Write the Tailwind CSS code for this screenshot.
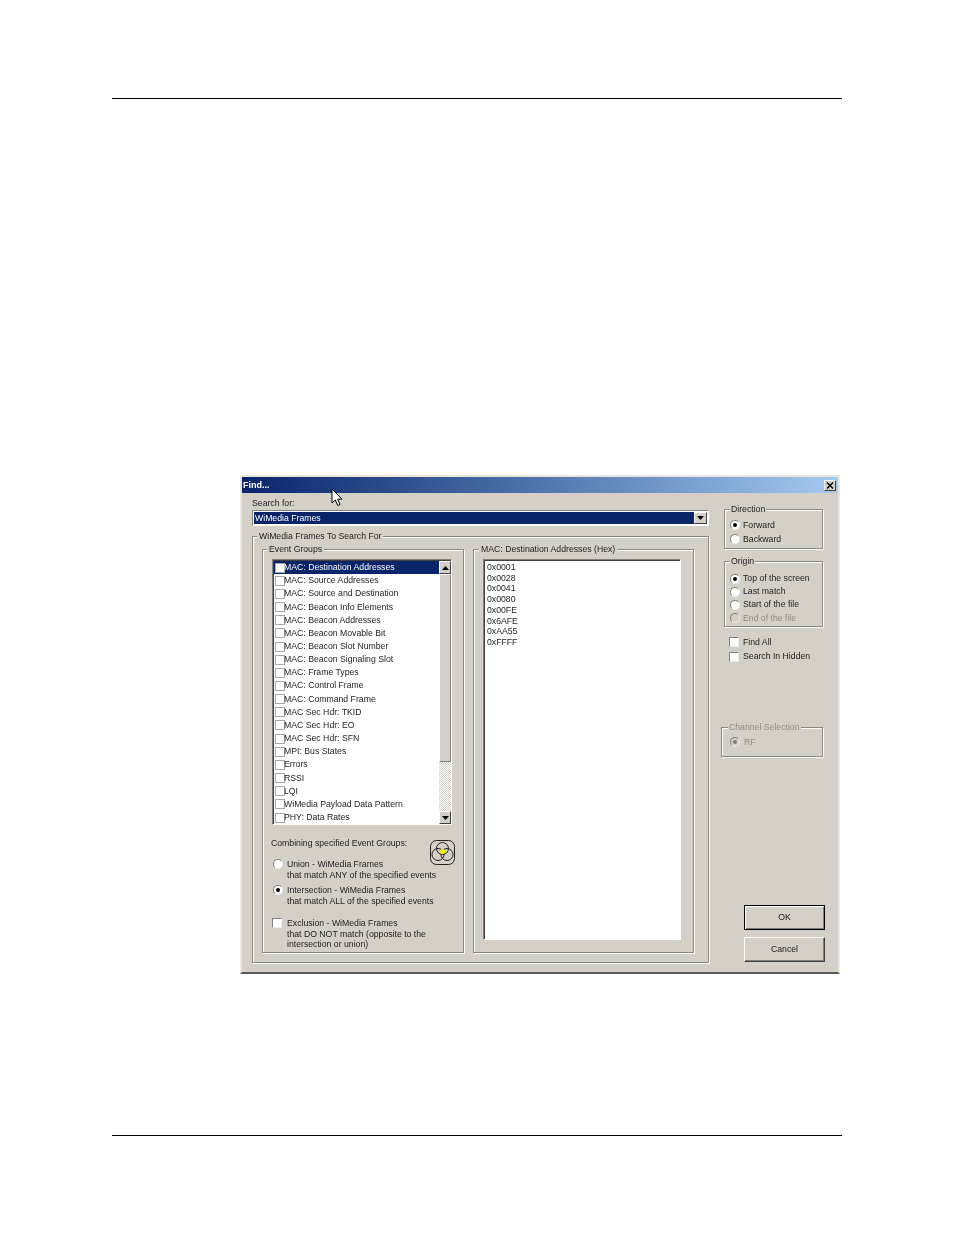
<!DOCTYPE html>
<html lang="en">
<head>
<meta charset="utf-8">
<title>Find dialog</title>
<script src="https://cdn.jsdelivr.net/npm/@tailwindcss/browser@4"></script>
</head>
<body class="bg-white font-['Liberation_Sans',Arial,sans-serif] text-[8.7px] leading-[11px] text-[#222]">
<div class="w-[954px] h-[1235px] flex flex-col pl-[112px]">
  <div class="mt-[98px] w-[730px] h-px bg-black"></div>

  <!-- Dialog window -->
  <div class="relative mt-[376px] ml-[128px] w-[600px] h-[499px] bg-[#d4d0c8] border-2 border-t-[#e8e6e1] border-l-[#e8e6e1] border-r-[#e8e6e1] border-b-[#5a5a5a] flex flex-col blur-[0.3px]">
    <!-- Title bar -->
    <div class="h-4 shrink-0 bg-gradient-to-r from-[#0a246a] to-[#a6caf0] flex items-center justify-between pl-[1px] pr-[2px] text-white font-bold text-[9px]">
      <span>Find...</span>
      <span class="w-3 h-[11px] bg-[#d4d0c8] border border-t-white border-l-white border-r-[#404040] border-b-[#404040] flex items-center justify-center">
        <svg width="8" height="7" viewBox="0 0 8 7"><path d="M1 0.5 L7 6.5 M7 0.5 L1 6.5" stroke="#000" stroke-width="1.4" fill="none"/></svg>
      </span>
    </div>

    <div class="flex pl-[10px]">
      <!-- Left column -->
      <div class="w-[457px] shrink-0">
        <div class="h-[17px] pt-[5px]">Search for:</div>
        <div class="h-4 flex bg-white border border-t-[#808080] border-l-[#808080] border-r-white border-b-white p-px">
          <div class="flex-1 bg-[#0a246a] text-white pl-[1px] leading-[12px]">WiMedia Frames</div>
          <div class="w-[13px] bg-[#d4d0c8] border border-t-white border-l-white border-r-[#404040] border-b-[#404040] flex items-center justify-center">
            <svg width="7" height="4" viewBox="0 0 7 4"><path d="M0 0H7L3.5 4Z" fill="#000"/></svg>
          </div>
        </div>

        <!-- WiMedia Frames To Search For -->
        <div class="relative mt-[10px] h-[427px] border border-[#8a8880] shadow-[inset_1px_1px_0_#fff,1px_1px_0_#fff] flex pl-[9px] pt-[12px] gap-[9px]">
          <span class="absolute -top-[6px] left-[4px] bg-[#d4d0c8] px-[2px]">WiMedia Frames To Search For</span>

          <!-- Event Groups -->
          <div class="relative w-[202px] h-[404px] border border-[#8a8880] shadow-[inset_1px_1px_0_#fff,1px_1px_0_#fff] pl-[9px] pt-[9px]">
            <span class="absolute -top-[6px] left-[4px] bg-[#d4d0c8] px-[2px]">Event Groups</span>

            <div class="w-[180px] h-[266px] bg-white border border-t-[#808080] border-l-[#808080] border-r-white border-b-white shadow-[inset_1px_1px_0_#404040] flex pl-px pt-px">
              <div class="w-[165px] shrink-0 [&>div]:h-[13.16px] [&>div]:flex [&>div]:items-center [&>div]:pl-[1px] [&_i]:w-[10px] [&_i]:h-[10px] [&_i]:mr-[-1px] [&_i]:shrink-0 [&_i]:border [&_i]:border-[#a8a8a8] [&_i]:bg-white">
                <div class="bg-[#0a246a] text-white"><i></i>MAC: Destination Addresses</div>
                <div><i></i>MAC: Source Addresses</div>
                <div><i></i>MAC: Source and Destination</div>
                <div><i></i>MAC: Beacon Info Elements</div>
                <div><i></i>MAC: Beacon Addresses</div>
                <div><i></i>MAC: Beacon Movable Bit</div>
                <div><i></i>MAC: Beacon Slot Number</div>
                <div><i></i>MAC: Beacon Signaling Slot</div>
                <div><i></i>MAC: Frame Types</div>
                <div><i></i>MAC: Control Frame</div>
                <div><i></i>MAC: Command Frame</div>
                <div><i></i>MAC Sec Hdr: TKID</div>
                <div><i></i>MAC Sec Hdr: EO</div>
                <div><i></i>MAC Sec Hdr: SFN</div>
                <div><i></i>MPI: Bus States</div>
                <div><i></i>Errors</div>
                <div><i></i>RSSI</div>
                <div><i></i>LQI</div>
                <div><i></i>WiMedia Payload Data Pattern</div>
                <div><i></i>PHY: Data Rates</div>
              </div>
              <!-- Scrollbar -->
              <div class="w-[12px] h-[263px] flex flex-col">
                <div class="h-[13px] bg-[#d4d0c8] border border-t-white border-l-white border-r-[#404040] border-b-[#404040] flex items-center justify-center"><svg width="7" height="4" viewBox="0 0 7 4"><path d="M0 4H7L3.5 0Z" fill="#000"/></svg></div>
                <div class="h-[188px] bg-[#d4d0c8] border border-t-white border-l-white border-r-[#808080] border-b-[#808080]"></div>
                <div class="flex-1 bg-[repeating-conic-gradient(#d4d0c8_0_25%,#ffffff_0_50%)] bg-[length:2px_2px]"></div>
                <div class="h-[13px] bg-[#d4d0c8] border border-t-white border-l-white border-r-[#404040] border-b-[#404040] flex items-center justify-center"><svg width="7" height="4" viewBox="0 0 7 4"><path d="M0 0H7L3.5 4Z" fill="#000"/></svg></div>
              </div>
            </div>

            <div class="flex justify-between items-start h-[32px] pr-[7px]">
              <span class="pt-[13px] -ml-px">Combining specified Event Groups:</span>
              <svg class="mt-[14px]" width="27" height="27" viewBox="0 0 27 27" fill="none" stroke="#222" stroke-width="1">
                <rect x="1.5" y="1.5" width="24" height="24" rx="6"/>
                <circle cx="13.5" cy="9.5" r="6"/><circle cx="9" cy="15.5" r="6"/><circle cx="18" cy="15.5" r="6"/>
                <circle cx="13.5" cy="12.5" r="2.6" fill="#f5f000" stroke="none"/>
              </svg>
            </div>

            <div class="mt-[2px] flex">
              <span class="ml-[1px] shrink-0 w-[10px] h-[10px] rounded-full bg-white border border-t-[#808080] border-l-[#808080] border-r-[#eeeeee] border-b-[#eeeeee]"></span>
              <div class="ml-[4px] leading-[10.7px]">Union - WiMedia Frames<br>that match ANY of the specified events</div>
            </div>
            <div class="mt-[5px] flex">
              <span class="ml-[1px] shrink-0 w-[10px] h-[10px] rounded-full bg-white border border-t-[#808080] border-l-[#808080] border-r-[#eeeeee] border-b-[#eeeeee] flex items-center justify-center"><span class="w-1 h-1 rounded-full bg-black"></span></span>
              <div class="ml-[4px] leading-[10.7px]">Intersection - WiMedia Frames<br>that match ALL of the specified events</div>
            </div>
            <div class="mt-[11px] flex">
              <span class="w-[10px] h-[10px] shrink-0 bg-white border border-t-[#808080] border-l-[#808080] border-r-[#eeeeee] border-b-[#eeeeee]"></span>
              <div class="ml-[5px] leading-[10.7px]">Exclusion - WiMedia Frames<br>that DO NOT match (opposite to the<br>intersection or union)</div>
            </div>
          </div>

          <!-- MAC: Destination Addresses (Hex) -->
          <div class="relative w-[221px] h-[404px] border border-[#8a8880] shadow-[inset_1px_1px_0_#fff,1px_1px_0_#fff] pl-[9px] pt-[9px]">
            <span class="absolute -top-[6px] left-[5px] bg-[#d4d0c8] px-[2px]">MAC: Destination Addresses (Hex)</span>
            <div class="w-[198px] h-[381px] bg-white border border-t-[#808080] border-l-[#808080] border-r-white border-b-white shadow-[inset_1px_1px_0_#404040] pl-[3px] pt-[2px] leading-[10.7px]">
              <div>0x0001</div><div>0x0028</div><div>0x0041</div><div>0x0080</div><div>0x00FE</div><div>0x6AFE</div><div>0xAA55</div><div>0xFFFF</div>
            </div>
          </div>
        </div>
      </div>

      <!-- Right column -->
      <div class="ml-[15px] w-[102px] shrink-0 flex flex-col pt-[16px]">
        <div class="relative w-[99px] h-[40px] border border-[#8a8880] shadow-[inset_1px_1px_0_#fff,1px_1px_0_#fff] pl-[5px] pt-[8px]">
          <span class="absolute -top-[6px] left-[5px] bg-[#d4d0c8] px-[1px]">Direction</span>
          <div class="flex items-center h-[14px] gap-[3px]"><span class="w-[10px] h-[10px] rounded-full bg-white border border-t-[#808080] border-l-[#808080] border-r-[#eeeeee] border-b-[#eeeeee] flex items-center justify-center"><span class="w-1 h-1 rounded-full bg-black"></span></span>Forward</div>
          <div class="flex items-center h-[14px] gap-[3px]"><span class="w-[10px] h-[10px] rounded-full bg-white border border-t-[#808080] border-l-[#808080] border-r-[#eeeeee] border-b-[#eeeeee]"></span>Backward</div>
        </div>

        <div class="relative mt-[12px] w-[99px] h-[66px] border border-[#8a8880] shadow-[inset_1px_1px_0_#fff,1px_1px_0_#fff] pl-[5px] pt-[10px]">
          <span class="absolute -top-[6px] left-[5px] bg-[#d4d0c8] px-[1px]">Origin</span>
          <div class="flex items-center h-[13.2px] gap-[3px]"><span class="w-[10px] h-[10px] rounded-full bg-white border border-t-[#808080] border-l-[#808080] border-r-[#eeeeee] border-b-[#eeeeee] flex items-center justify-center"><span class="w-1 h-1 rounded-full bg-black"></span></span>Top of the screen</div>
          <div class="flex items-center h-[13.2px] gap-[3px]"><span class="w-[10px] h-[10px] rounded-full bg-white border border-t-[#808080] border-l-[#808080] border-r-[#eeeeee] border-b-[#eeeeee]"></span>Last match</div>
          <div class="flex items-center h-[13.2px] gap-[3px]"><span class="w-[10px] h-[10px] rounded-full bg-white border border-t-[#808080] border-l-[#808080] border-r-[#eeeeee] border-b-[#eeeeee]"></span>Start of the file</div>
          <div class="flex items-center h-[13.2px] gap-[3px] text-[#8f8c85]"><span class="w-[10px] h-[10px] rounded-full bg-[#d4d0c8] border border-t-[#808080] border-l-[#808080] border-r-[#eeeeee] border-b-[#eeeeee]"></span>End of the file</div>
        </div>

        <div class="mt-[8px] pl-[5px] flex items-center h-[14.5px] gap-[4px]"><span class="w-[10px] h-[10px] bg-white border border-t-[#808080] border-l-[#808080] border-r-[#eeeeee] border-b-[#eeeeee]"></span>Find All</div>
        <div class="pl-[5px] flex items-center h-[14.5px] gap-[4px]"><span class="w-[10px] h-[10px] bg-white border border-t-[#808080] border-l-[#808080] border-r-[#eeeeee] border-b-[#eeeeee]"></span>Search In Hidden</div>

        <div class="relative mt-[63px] -ml-[3px] w-[102px] h-[30px] border border-[#8a8880] shadow-[inset_1px_1px_0_#fff,1px_1px_0_#fff] pl-[8px] pt-[8px] text-[#8f8c85]">
          <span class="absolute -top-[6px] left-[6px] bg-[#d4d0c8] px-[1px]">Channel Selection</span>
          <div class="flex items-center h-[12px] gap-[4px]"><span class="w-[10px] h-[10px] rounded-full bg-[#d4d0c8] border border-t-[#808080] border-l-[#808080] border-r-[#eeeeee] border-b-[#eeeeee] flex items-center justify-center"><span class="w-1 h-1 rounded-full bg-[#808080]"></span></span>RF</div>
        </div>

        <button class="mt-[148px] ml-[20px] w-[81px] h-[25px] shrink-0 bg-[#d4d0c8] border border-black shadow-[inset_1px_1px_0_#fff,inset_-1px_-1px_0_#808080] text-center">OK</button>
        <button class="mt-[7px] ml-[20px] w-[81px] h-[25px] shrink-0 bg-[#d4d0c8] border border-t-white border-l-white border-r-[#404040] border-b-[#404040] shadow-[inset_-1px_-1px_0_#808080] text-center">Cancel</button>
      </div>
    </div>

    <!-- Mouse pointer -->
    <svg class="absolute left-[89px] top-[11px]" width="12" height="19" viewBox="0 0 12 19"><path d="M1 1V15L4.3 12L6.8 17.5L9 16.5L6.6 11.2H11Z" fill="#fff" stroke="#000" stroke-width="1"/></svg>
  </div>

  <div class="mt-[161px] w-[730px] h-px bg-black"></div>
</div>
</body>
</html>
